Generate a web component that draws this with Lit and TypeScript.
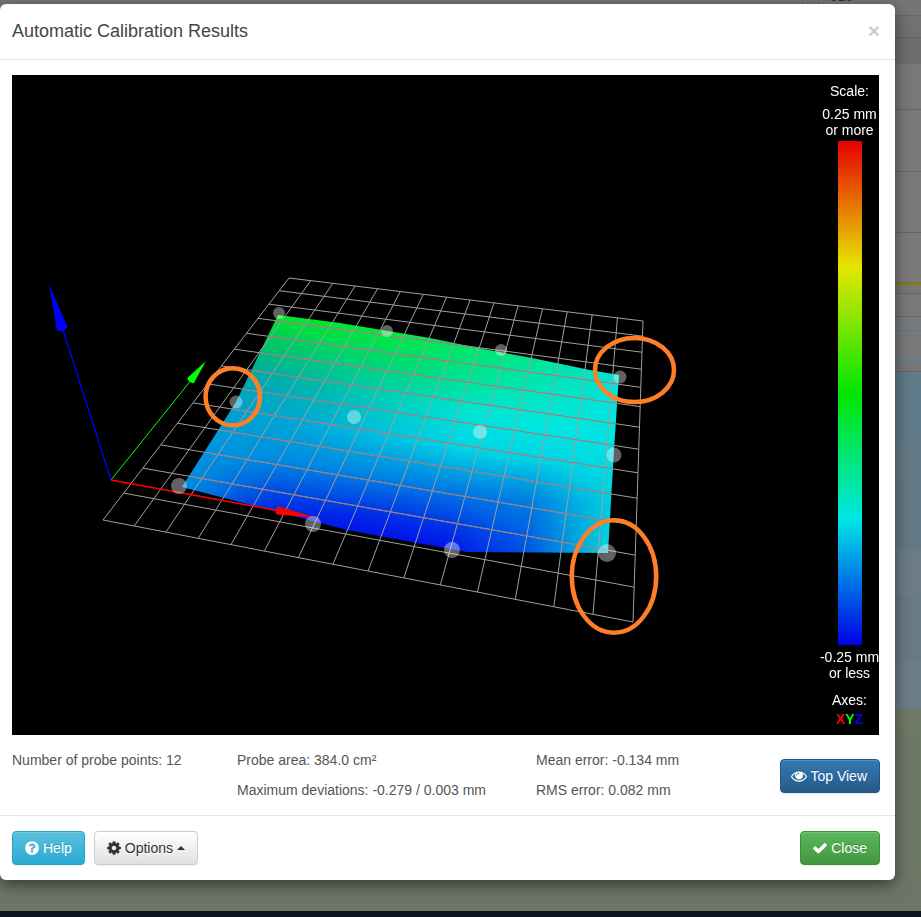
import { LitElement, html, css, svg } from "lit";
import { customElement } from "lit/decorators.js";

type Pt = [number, number];
const ICONS: Record<string, string> = {
  check: "M1671 566q0 40-28 68l-724 724-136 136q-28 28-68 28t-68-28l-136-136-362-362q-28-28-28-68t28-68l136-136q28-28 68-28t68 28l294 295 656-657q28-28 68-28t68 28l136 136q28 28 28 68z",
  eye: "M1664 960q-152-236-381-353 61 104 61 225 0 185-131.500 316.500t-316.500 131.500-316.500-131.500-131.500-316.500q0-121 61-225-229 117-381 353 133 205 333.500 326.500t434.500 121.500 434.500-121.500 333.500-326.500zm-720-384q0-20-14-34t-34-14q-125 0-214.500 89.500t-89.500 214.500q0 20 14 34t34 14 34-14 14-34q0-86 61-147t147-61q20 0 34-14t14-34zm848 384q0 34-20 69-140 230-376.500 368.500t-499.500 138.500-499.500-139-376.500-368q-20-35-20-69t20-69q140-229 376.500-368t499.500-139 499.500 139 376.500 368q20 35 20 69z",
  cog: "M1152 896q0-106-75-181t-181-75-181 75-75 181 75 181 181 75 181-75 75-181zm512-109v222q0 12-8 23t-20 13l-185 28q-19 54-39 91 35 50 107 138 10 12 10 25t-9 23q-27 37-99 108t-94 71q-12 0-26-9l-138-108q-44 23-91 38-16 136-29 186-7 28-36 28h-222q-14 0-24.500-8.500t-11.500-21.500l-28-184q-49-16-90-37l-141 107q-10 9-25 9-14 0-25-11-126-114-165-168-7-10-7-23 0-12 8-23 15-21 51-66.500t54-70.500q-27-50-41-99l-183-27q-13-2-21-12.500t-8-23.500v-222q0-12 8-23t19-13l186-28q14-46 39-92-40-57-107-138-10-12-10-24 0-10 9-23 26-36 98.500-107.500t94.500-71.500q13 0 26 10l138 107q44-23 91-38 16-136 29-186 7-28 36-28h222q14 0 24.500 8.500t11.500 21.500l28 184q49 16 90 37l142-107q9-9 24-9 13 0 25 10 129 119 165 170 7 8 7 22 0 12-8 23-15 21-51 66.500t-54 70.500q26 50 41 98l183 28q13 2 21 12.500t8 23.500z",
  question: "M1024 1376v-192q0-14-9-23t-23-9h-192q-14 0-23 9t-9 23v192q0 14 9 23t23 9h192q14 0 23-9t9-23zm256-672q0-88-55.500-163t-138.500-116-170-41q-243 0-371 213-15 24 8 42l132 100q7 6 19 6 16 0 25-12 53-68 86-92 34-24 86-24 48 0 85.500 26t37.500 59q0 38-20 61t-68 45q-63 28-115.500 86.500t-52.500 125.500v36q0 14 9 23t23 9h192q14 0 23-9t9-23q0-19 21.500-49.500t54.500-49.500q32-18 49-28.500t46-35 44.500-48 28-60.500 12.500-81zm384 192q0 209-103 385.500t-279.500 279.500-385.500 103-385.500-103-279.500-279.500-103-385.500 103-385.500 279.500-279.500 385.500-103 385.500 103 279.500 279.500 103 385.500z",
};
const icon = (name: string) =>
  html`<svg class="fa" viewBox="0 0 1792 1792">${svg`<path fill="currentColor" d=${ICONS[name]}></path>`}</svg>`;

/* Projective map of the unit square onto a quad, and its inverse */
function homography(p: Pt[]) {
  const [[x0, y0], [x1, y1], [x2, y2], [x3, y3]] = p;
  const dx1 = x1 - x2, dx2 = x3 - x2, sx = x0 - x1 + x2 - x3;
  const dy1 = y1 - y2, dy2 = y3 - y2, sy = y0 - y1 + y2 - y3;
  const d = dx1 * dy2 - dx2 * dy1;
  const g = (sx * dy2 - dx2 * sy) / d;
  const h = (dx1 * sy - sx * dy1) / d;
  const a = x1 - x0 + g * x1, b = x3 - x0 + h * x3, c = x0;
  const e = y1 - y0 + g * y1, f = y3 - y0 + h * y3, i = y0;
  const fwd = (u: number, v: number): Pt => {
    const w = g * u + h * v + 1;
    return [(a * u + b * v + c) / w, (e * u + f * v + i) / w];
  };
  const inv = (x: number, y: number): Pt => {
    const A = f - i * h, B = c * h - b, C = b * i - c * f;
    const D = i * g - e, E = a - c * g, F = c * e - a * i;
    const G = e * h - f * g, H = b * g - a * h, I = a * f - b * e;
    const w = G * x + H * y + I;
    return [(A * x + B * y + C) / w, (D * x + E * y + F) / w];
  };
  return { fwd, inv };
}
const gridMap = homography([[103, 520], [633, 622], [643, 321], [289, 278]]).fwd;
const meshInv = homography([[182, 487], [608, 553], [619, 375], [278, 315]]).inv;
const DIV_U = 15, DIV_V = 13;

const MESH: Pt[] = [[278, 315], [340, 323], [430, 338], [478, 348], [532, 358], [590, 370], [619, 375], [614, 450], [608, 553], [467, 552], [417, 543], [347, 530], [182, 487], [236, 402]];

/* Surface colour table: [v, then (g, b) for u = 0, .2, .4, .6, .8, 1] */
const V_ROWS = [1, 0.8, 0.6, 0.4, 0.2, 0, -0.15];
const TABLE: number[][][] = [
  [[230, 40], [232, 50], [232, 80], [230, 115], [228, 165], [228, 215]],
  [[195, 105], [208, 115], [218, 120], [228, 155], [230, 195], [228, 222]],
  [[165, 170], [185, 175], [210, 190], [228, 215], [232, 225], [228, 228]],
  [[160, 205], [170, 215], [195, 225], [215, 228], [210, 228], [218, 226]],
  [[150, 222], [140, 226], [135, 228], [130, 228], [130, 226], [205, 224]],
  [[140, 222], [55, 228], [40, 232], [45, 232], [90, 228], [212, 220]],
  [[60, 225], [0, 235], [0, 235], [0, 235], [60, 228], [212, 220]],
];
function surfaceColor(u: number, v: number): Pt {
  const uu = Math.min(0.9999, Math.max(0, u)) * 5;
  const ui = Math.floor(uu), uf = uu - ui;
  const vc = Math.min(1, Math.max(-0.15, v));
  let r = 0;
  while (r < V_ROWS.length - 2 && vc < V_ROWS[r + 1]) r++;
  const vf = (V_ROWS[r] - vc) / (V_ROWS[r] - V_ROWS[r + 1]);
  const at = (k: number) => {
    const top = TABLE[r][ui][k] * (1 - uf) + TABLE[r][ui + 1][k] * uf;
    const bot = TABLE[r + 1][ui][k] * (1 - uf) + TABLE[r + 1][ui + 1][k] * uf;
    return top * (1 - vf) + bot * vf;
  };
  return [at(0), at(1)];
}

const PROBES: [number, number, number][] = [
  [279, 313, 6], [387, 331, 6], [501, 350, 6], [620, 377, 6.5],
  [236, 402, 6.5], [354, 417, 7], [480, 432, 7], [614, 455, 7.5],
  [179, 486, 8], [313, 524, 8], [452, 550, 8], [607, 553, 9],
];

const STATS = [
  ["Number of probe points: 12", "Probe area: 384.0 cm²", "Mean error: -0.134 mm"],
  ["", "Maximum deviations: -0.279 / 0.003 mm", "RMS error: 0.082 mm"],
];

const BANDS = [
  { h: 15, c: "#757575" }, { h: 1, c: "#666" }, { h: 21, c: "#717171" }, { h: 1, c: "#636363" }, { h: 26, c: "#6d6d6d" },
  { h: 45, c: "#787878" }, { h: 1, c: "#666" }, { h: 61, c: "#797979" }, { h: 1, c: "#666" }, { h: 60, c: "#797979" }, { h: 1, c: "#666" },
  { h: 49, c: "#7a7a7a" }, { h: 3, c: "#7c7c18" }, { h: 8, c: "#777" }, { h: 1, c: "#666" }, { h: 22, c: "#797979" }, { h: 1, c: "#666" },
  { h: 13, c: "#797979" }, { h: 1, c: "#4e7c9c" }, { h: 30, c: "#797979" }, { h: 1, c: "#4e7c9c" }, { h: 9, c: "#777" }, { h: 1, c: "#666" },
  { h: 67, c: "#5f7a88" }, { h: 46, c: "#647a86" }, { h: 65, c: "#637985" }, { h: 46, c: "#6c7c85" }, { h: 66, c: "#687a84" }, { h: 47, c: "#6b7d88" },
  { h: 25, c: "#6f7a68" }, { h: 26, c: "#6d7866" }, { h: 27, c: "#6e7867" }, { h: 86, c: "#6d7866" }, { h: 38, c: "#6d7666" }, { h: 6, c: "#0b1520" },
];

@customElement("app-root")
export class AppRoot extends LitElement {
  static styles = css`
    :host { display: block; width: 921px; height: 917px; position: relative; overflow: hidden; font-family: "Liberation Sans", Arial, sans-serif; font-size: 14px; color: #333; }
    .backdrop { display: flex; flex-direction: column; width: 100%; height: 100%; }
    .band { flex: none; }
    .peek { position: absolute; top: -12px; left: 830px; color: #333; font-size: 14px; line-height: 16px; }
    .tick { position: absolute; top: 0; width: 1px; height: 5px; background: #5d6770; }
    .tick.a { left: 802px; }
    .tick.b { left: 818px; }
    .modal { position: absolute; left: 0; top: 4px; width: 895px; height: 876px; background: #fff; border-radius: 6px; box-shadow: 0 5px 15px rgba(0,0,0,.5); display: flex; flex-direction: column; }
    header { flex: none; height: 56px; box-sizing: border-box; border-bottom: 1px solid #e5e5e5; display: flex; align-items: center; justify-content: space-between; padding: 0 15px 2px 12px; }
    h4 { margin: 0; font-size: 18px; font-weight: 400; line-height: 20px; color: #444; }
    .x { font-size: 21px; font-weight: 700; line-height: 1; color: #000; opacity: .2; }
    main { flex: 1; padding: 15px 15px 0 12px; }
    .view { position: relative; width: 867px; height: 660px; background: #000; overflow: hidden; }
    canvas { display: block; }
    .legend { position: absolute; top: 0; bottom: 0; right: 0; width: 59px; display: flex; flex-direction: column; align-items: center; color: #fff; line-height: 16px; text-align: center; white-space: nowrap; padding-top: 8px; box-sizing: border-box; }
    .legend div { flex: none; }
    .range-top { margin-top: 7px; }
    .bar { width: 24px; height: 504px; margin: 3px 0 4px 1px; background: linear-gradient(to bottom, #e60000 0%, #e6e600 25%, #00e600 50%, #00e6e6 75%, #0000e6 100%); }
    .axes { margin-top: 11px; }
    .xyz { margin-top: 3px; font-weight: 700; }
    .xyz .r { color: #f00; } .xyz .g { color: #0f0; } .xyz .b { color: #00f; }
    .stats { display: grid; grid-template-columns: 225px 299px 244px 100px; grid-auto-rows: 20px; row-gap: 10px; margin-top: 15px; width: 868px; line-height: 20px; color: #555; align-items: center; }
    .stats .btn { grid-column: 4; grid-row: 1 / 3; justify-self: end; align-self: center; margin-top: 2px; }
    footer { flex: none; height: 65px; box-sizing: border-box; border-top: 1px solid #e5e5e5; padding: 15px 15px 15px 12px; display: flex; align-items: center; }
    .btn { display: inline-flex; align-items: center; justify-content: center; height: 34px; box-sizing: border-box; border: 1px solid; border-radius: 4px; padding: 0 12px; font: inherit; line-height: 20px; white-space: nowrap; box-shadow: inset 0 1px 0 rgba(255,255,255,.15), 0 1px 1px rgba(0,0,0,.075); text-shadow: 0 -1px 0 rgba(0,0,0,.2); color: #fff; }
    .fa { width: 16px; height: 16px; margin: 0 3px 0 -1px; flex: none; }
    .info { background: linear-gradient(#5bc0de, #2aabd2); border-color: #28a4c9; }
    .default { background: linear-gradient(#fff, #e0e0e0); border-color: #ccc; color: #333; text-shadow: 0 1px 0 #fff; margin-left: 9px; }
    .success { background: linear-gradient(#5cb85c, #419641); border-color: #3e8f3e; margin-left: auto; }
    .primary { background: linear-gradient(#337ab7, #265a88); border-color: #245580; padding-left: 11px; }
    .caret { width: 0; height: 0; margin-left: 4px; border-left: 4px solid transparent; border-right: 4px solid transparent; border-bottom: 4px solid #333; }
  `;

  firstUpdated() {
    const cv = this.renderRoot.querySelector("canvas") as HTMLCanvasElement;
    const ctx = cv.getContext("2d")!;
    ctx.fillStyle = "#000";
    ctx.fillRect(0, 0, cv.width, cv.height);
    ctx.translate(-12, -75);

    const poly = () => {
      ctx.beginPath();
      MESH.forEach(([x, y], i) => (i ? ctx.lineTo(x, y) : ctx.moveTo(x, y)));
      ctx.closePath();
    };

    /* surface */
    const ox = 175, oy = 310, w = 450, h = 250;
    const off = document.createElement("canvas");
    off.width = w; off.height = h;
    const octx = off.getContext("2d")!;
    const img = octx.createImageData(w, h);
    let seed = 7;
    const rnd = () => ((seed = (seed * 16807) % 2147483647) / 2147483647);
    for (let py = 0; py < h; py++) {
      for (let px = 0; px < w; px++) {
        const [u, v] = meshInv(px + ox, py + oy);
        const [g, b] = surfaceColor(u, v);
        const n = (rnd() - 0.5) * 4;
        const k = (py * w + px) * 4;
        img.data[k] = 0;
        img.data[k + 1] = g + n;
        img.data[k + 2] = b + n;
        img.data[k + 3] = 255;
      }
    }
    octx.putImageData(img, 0, 0);
    ctx.save();
    poly();
    ctx.clip();
    ctx.drawImage(off, ox, oy);
    ctx.restore();

    /* grid */
    const line = (a: Pt, b: Pt, c: string, lw = 1) => {
      ctx.strokeStyle = c; ctx.lineWidth = lw;
      ctx.beginPath(); ctx.moveTo(a[0], a[1]); ctx.lineTo(b[0], b[1]); ctx.stroke();
    };
    for (let i = 0; i <= DIV_U; i++) line(gridMap(i / DIV_U, 0), gridMap(i / DIV_U, 1), "#a0a0a0");
    for (let j = 0; j <= DIV_V; j++) line(gridMap(0, j / DIV_V), gridMap(1, j / DIV_V), "#a0a0a0");
    ctx.save();
    poly();
    ctx.clip();
    for (let j = 0; j <= DIV_V; j++) line(gridMap(0, j / DIV_V), gridMap(1, j / DIV_V), "#a0787e");
    ctx.restore();

    /* axes */
    const cone = (tip: Pt, base: Pt, hw: number, c: string) => {
      const dx = tip[0] - base[0], dy = tip[1] - base[1], l = Math.hypot(dx, dy);
      const nx = -dy / l * hw, ny = dx / l * hw;
      ctx.fillStyle = c;
      ctx.beginPath();
      ctx.moveTo(tip[0], tip[1]);
      ctx.lineTo(base[0] + nx, base[1] + ny);
      ctx.lineTo(base[0] - nx, base[1] - ny);
      ctx.closePath();
      ctx.fill();
      ctx.beginPath();
      ctx.ellipse(base[0], base[1], hw, hw * 0.55, Math.atan2(ny, nx), 0, Math.PI * 2);
      ctx.fill();
    };
    const o: Pt = [111, 480];
    line(o, [280, 511], "#f00", 1.5);
    line(o, [192, 379], "#0f0", 1);
    line(o, [63, 330], "#00f", 1.3);
    cone([317, 518], [278, 510.5], 4, "#f00");
    cone([206, 361], [191, 380], 4, "#0f0");
    cone([49, 284], [62, 328], 5.5, "#00f");

    /* probe points */
    ctx.fillStyle = "rgba(255,255,255,.38)";
    for (const [x, y, r] of PROBES) {
      ctx.beginPath(); ctx.arc(x, y, r, 0, Math.PI * 2); ctx.fill();
    }

    /* hand-drawn rings */
    ctx.strokeStyle = "#ff7f27";
    ctx.lineWidth = 4.5;
    for (const [x, y, rx, ry] of [[232.8, 396.8, 27.2, 28.5], [634.5, 370, 39.5, 32], [614, 576.5, 42.2, 56.2]]) {
      ctx.beginPath(); ctx.ellipse(x, y, rx, ry, 0, 0, Math.PI * 2); ctx.stroke();
    }
  }

  render() {
    return html`
      <div class="backdrop">
        ${BANDS.map((b) => html`<div class="band" style="height:${b.h}px;background:${b.c}"></div>`)}
      </div>
      <span class="peek">925</span><i class="tick a"></i><i class="tick b"></i>
      <section class="modal">
        <header><h4>Automatic Calibration Results</h4><span class="x">×</span></header>
        <main>
          <div class="view">
            <canvas width="867" height="660"></canvas>
            <div class="legend">
              <div>Scale:</div>
              <div class="range-top">0.25 mm<br />or more</div>
              <div class="bar"></div>
              <div>-0.25 mm<br />or less</div>
              <div class="axes">Axes:</div>
              <div class="xyz"><span class="r">X</span><span class="g">Y</span><span class="b">Z</span></div>
            </div>
          </div>
          <div class="stats">
            ${STATS.flat().map((s) => html`<span>${s}</span>`)}
            <button class="btn primary">${icon("eye")}Top View</button>
          </div>
        </main>
        <footer>
          <button class="btn info">${icon("question")}Help</button>
          <button class="btn default">${icon("cog")}Options<span class="caret"></span></button>
          <button class="btn success">${icon("check")}Close</button>
        </footer>
      </section>
    `;
  }
}
